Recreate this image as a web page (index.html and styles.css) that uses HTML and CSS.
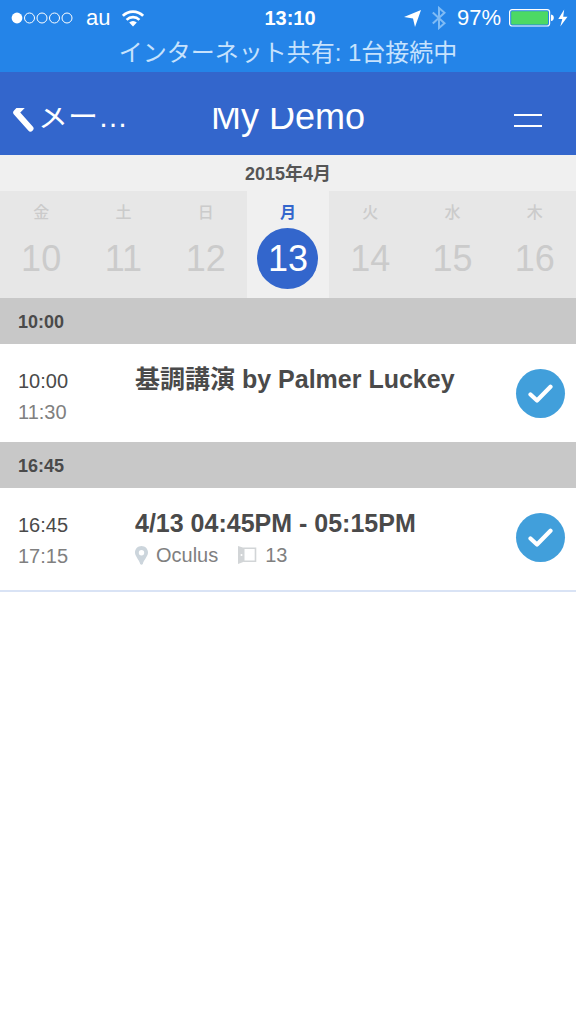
FILE: index.html
```html
<!DOCTYPE html>
<html lang="ja">
<head>
<meta charset="utf-8">
<meta name="viewport" content="width=device-width, initial-scale=1">
<title>My Demo</title>
<link rel="stylesheet" href="styles.css">
</head>
<body>
<div class="status">
  <div class="status-row">
    <div class="status-left">
      <svg class="signal" width="62" height="12" viewBox="0 0 62 12" aria-hidden="true">
        <circle cx="5" cy="6" r="5.400" fill="#fff"/>
        <g fill="none" stroke="#fff" stroke-width="1"><circle cx="17.500" cy="6" r="5"/><circle cx="30" cy="6" r="5"/><circle cx="42.500" cy="6" r="5"/><circle cx="55" cy="6" r="5"/></g>
      </svg>
      <span>au</span>
      <svg width="22" height="17" viewBox="0 0 22 17" aria-hidden="true">
        <g fill="none" stroke="#fff" stroke-width="2.600"><path d="M.9 5.800a14.300 14.300 0 0 1 20.200 0"/><path d="M4.600 9.800a9 9 0 0 1 12.800 0"/></g>
        <path d="M11 16.500L7.200 12.600a5.400 5.400 0 0 1 7.600 0z" fill="#fff"/>
      </svg>
    </div>
    <span class="clock">13:10</span>
    <div class="status-right">
      <svg width="17" height="17" viewBox="0 0 17 17" aria-hidden="true"><path d="M17 0L11 17 9 8.500 0 7z" fill="#fff"/></svg>
      <svg class="bluetooth" width="14" height="24" viewBox="0 0 14 24" aria-hidden="true"><path d="M.8 6.500L12.500 17.300 7 22V2l5.500 4.700L.8 17.500" fill="none" stroke="#7fbbf5" stroke-width="2"/></svg>
      <span>97%</span>
      <svg width="59" height="18" viewBox="0 0 59 18" aria-hidden="true">
        <rect x=".6" y=".6" width="40" height="16.400" rx="2.500" fill="none" stroke="#fff" stroke-width="1.200"/>
        <rect x="2.200" y="2.200" width="36.800" height="13.200" rx="1" fill="#4cd964"/>
        <path d="M42 5.500q2.800.5 2.800 3.300T42 12.100z" fill="#fff"/>
        <path d="M55.200.5L49.300 10h4l-2 7.500 7.200-9.700h-4.300z" fill="#fff"/>
      </svg>
    </div>
  </div>
  <div class="sharing">インターネット共有: 1台接続中</div>
</div>
<header class="nav">
  <div class="nav-row">
    <button class="back" type="button">
      <svg width="26" height="26" viewBox="0 0 26 26" aria-hidden="true"><path d="M13.500 -3L6.200 4.500 20.500 20.500" fill="none" stroke="#fff" stroke-width="6" stroke-linecap="round" stroke-linejoin="round"/></svg>
      <span>メー…</span>
    </button>
    <h1 class="title">My Demo</h1>
    <button class="menu" type="button" aria-label="メニュー"><span class="menu-line"></span><span class="menu-line"></span></button>
  </div>
</header>
<main>
  <section class="calendar">
    <h2 class="month">2015年4月</h2>
    <div class="week">
      <button class="day" type="button"><span class="weekday">金</span><span class="date">10</span></button>
      <button class="day" type="button"><span class="weekday">土</span><span class="date">11</span></button>
      <button class="day" type="button"><span class="weekday">日</span><span class="date">12</span></button>
      <button class="day selected" type="button" aria-current="date"><span class="weekday">月</span><span class="date">13</span></button>
      <button class="day" type="button"><span class="weekday">火</span><span class="date">14</span></button>
      <button class="day" type="button"><span class="weekday">水</span><span class="date">15</span></button>
      <button class="day" type="button"><span class="weekday">木</span><span class="date">16</span></button>
    </div>
  </section>
  <h2 class="slot">10:00</h2>
  <article class="event">
    <div class="times"><time>10:00</time><time class="end">11:30</time></div>
    <div class="details"><h3 class="name">基調講演 by Palmer Luckey</h3></div>
    <label class="check">
      <input type="checkbox" checked aria-label="基調講演 by Palmer Luckey">
      <svg width="26" height="20" viewBox="0 0 26 20" aria-hidden="true"><path d="M2.500 10.500L9 16.500 22.500 2.800" fill="none" stroke="#fff" stroke-width="4.200" stroke-linecap="round" stroke-linejoin="round"/></svg>
    </label>
  </article>
  <h2 class="slot">16:45</h2>
  <article class="event last">
    <div class="times"><time>16:45</time><time class="end">17:15</time></div>
    <div class="details">
      <h3 class="name">4/13 04:45PM - 05:15PM</h3>
      <div class="meta">
        <svg width="13" height="19" viewBox="0 0 13 19" aria-hidden="true"><path fill-rule="evenodd" d="M6.500 0C2.900 0 0 2.800 0 6.400c0 3.800 4 7 5.200 11.500q1.300 1.600 2.600 0C9 13.400 13 10.200 13 6.400 13 2.800 10.100 0 6.500 0zm0 4a2.700 2.700 0 1 1 0 5.400 2.700 2.700 0 0 1 0-5.400z" fill="#ccd5dc"/></svg>
        <span class="place">Oculus</span>
        <svg width="19" height="18" viewBox="0 0 19 18" aria-hidden="true"><path d="M0 0l6.500 2v13.500L0 18z" fill="#d2d5d7"/><path d="M5.500 2.300h12v13h-12" fill="none" stroke="#d2d5d7" stroke-width="1.600"/><circle cx="3.500" cy="9" r="1" fill="#fff"/></svg>
        <span>13</span>
      </div>
    </div>
    <label class="check">
      <input type="checkbox" checked aria-label="4/13 04:45PM - 05:15PM">
      <svg width="26" height="20" viewBox="0 0 26 20" aria-hidden="true"><path d="M2.500 10.500L9 16.500 22.500 2.800" fill="none" stroke="#fff" stroke-width="4.200" stroke-linecap="round" stroke-linejoin="round"/></svg>
    </label>
  </article>
</main>
</body>
</html>
```

FILE: styles.css
```css
* { box-sizing: border-box; }
body {
  margin: 0;
  background: #fff;
  color: #4a4a4a;
  font-family: "Liberation Sans", "Noto Sans CJK JP", sans-serif;
}
h1, h2, h3 { margin: 0; font-weight: 400; }
button {
  margin: 0;
  padding: 0;
  border: 0;
  background: none;
  color: inherit;
  font: inherit;
}
svg { display: block; flex: none; }

.status {
  padding-bottom: 2px;
  background: #2484e8;
  color: #fff;
}
.status-row {
  display: grid;
  grid-template-columns: 1fr auto 1fr;
  align-items: center;
  height: 36px;
  padding: 0 8px 0 12px;
  font-size: 22px;
}
.status-left, .status-right { display: flex; align-items: center; }
.status-left { gap: 12px; }
.status-right { justify-content: flex-end; gap: 8px; }
.signal { overflow: visible; }
.bluetooth { margin: 0 3px; }
.clock { font-size: 20px; font-weight: 700; }
.sharing {
  color: #c6e2fd;
  font-size: 24px;
  line-height: 34px;
  text-align: center;
}

.nav {
  padding-top: 36px;
  background: #3366cc;
  color: #fff;
}
.nav-row {
  display: grid;
  grid-template-columns: 1fr auto 1fr;
  height: 47px;
  overflow: hidden;
}
.back {
  display: flex;
  align-items: flex-start;
  gap: 2px;
  padding-left: 10px;
  font-size: 30px;
  line-height: 18px;
}
.title { font-size: 36px; line-height: 17px; }
.menu {
  display: flex;
  flex-direction: column;
  justify-self: end;
  gap: 9px;
  padding: 6px 34px 0 0;
}
.menu-line { width: 28px; height: 2px; background: #fff; }

.calendar { background: #f0f0f0; }
.month {
  color: #555;
  font-size: 18px;
  font-weight: 700;
  line-height: 38px;
  height: 36px;
  text-align: center;
}
.week { display: grid; grid-template-columns: repeat(7, 1fr); }
.day {
  display: flex;
  flex-direction: column;
  align-items: center;
  gap: 3px;
  padding: 10px 0 9px;
  background: #e7e7e7;
  color: #cbcbcb;
}
.weekday { font-size: 16px; font-weight: 500; line-height: 24px; }
.date {
  width: 61px;
  border-radius: 50%;
  font-size: 36px;
  line-height: 61px;
}
.selected { background: #f0f0f0; color: #3366cc; }
.selected .weekday { font-weight: 700; }
.selected .date { background: #3366cc; color: #fff; }

.slot {
  padding: 2px 0 0 18px;
  background: #c8c8c8;
  font-size: 18px;
  font-weight: 700;
  line-height: 44px;
}
.event {
  display: grid;
  grid-template-columns: 117px 1fr 49px;
  align-items: start;
  padding: 20px 11px 14px 18px;
}
.last { padding-bottom: 18px; border-bottom: 2px solid #d9e3f5; }
.times { display: grid; padding-top: 2px; font-size: 20px; line-height: 31px; }
.end { color: #808080; }
.name {
  font-size: 25px;
  font-weight: 700;
  line-height: 30px;
}
.meta {
  display: flex;
  align-items: center;
  gap: 8px;
  color: #808080;
  font-size: 20px;
  line-height: 34px;
}
.place { margin-right: 12px; }
.check {
  display: grid;
  place-items: center;
  margin-top: 5px;
}
.check > * { grid-area: 1 / 1; }
.check input {
  width: 49px;
  height: 49px;
  margin: 0;
  border-radius: 50%;
  background: #419fdb;
  appearance: none;
}
.check svg { z-index: 1; }
```
